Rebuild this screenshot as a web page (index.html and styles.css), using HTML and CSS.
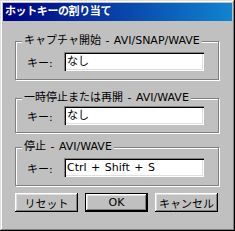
FILE: index.html
```html
<!DOCTYPE html>
<html lang="ja">

<head>
    <meta charset="UTF-8">
    <title>ホットキーの割り当て</title>
    <link rel="stylesheet" href="styles.css">
</head>

<body>
    <div class="window">
        <div class="titlebar">ホットキーの割り当て</div>

        <div class="content">
            <div class="group">
                <span class="group-label">キャプチャ開始 - AVI/SNAP/WAVE</span>
                <div class="field-row">
                    <span class="field-label">キー:</span>
                    <div class="textbox">なし</div>
                </div>
            </div>

            <div class="group group-short">
                <span class="group-label">一時停止または再開 - AVI/WAVE</span>
                <div class="field-row">
                    <span class="field-label">キー:</span>
                    <div class="textbox">なし</div>
                </div>
            </div>

            <div class="group">
                <span class="group-label">停止 - AVI/WAVE</span>
                <div class="field-row">
                    <span class="field-label">キー:</span>
                    <div class="textbox">Ctrl + Shift + S</div>
                </div>
            </div>

            <div class="buttons">
                <button class="btn">リセット</button>
                <button class="btn btn-default">OK</button>
                <button class="btn">キャンセル</button>
            </div>
        </div>
    </div>
</body>

</html>
```

FILE: styles.css
```css
* {
    margin: 0;
    padding: 0;
    box-sizing: border-box;
}

body {
    width: 235px;
    height: 231px;
    font-family: 'DejaVu Sans', 'Noto Sans CJK JP', sans-serif;
    font-size: 11px;
    color: #000;
}

.window {
    width: 235px;
    height: 231px;
    padding: 3px;
    background: #c0c0c0;
    box-shadow: inset -1px -1px #000, inset 1px 1px #dfdfdf,
        inset -2px -2px #808080, inset 2px 2px #fff;
    display: flex;
    flex-direction: column;
}

.titlebar {
    height: 18px;
    line-height: 18px;
    padding-left: 2px;
    background: linear-gradient(90deg, #000080, #1084d0);
    color: #fff;
    font-weight: bold;
    font-size: 11px;
    letter-spacing: -0.4px;
}

.content {
    padding: 20px 13px 0 12px;
    display: flex;
    flex-direction: column;
}

.group {
    position: relative;
    height: 39px;
    margin-bottom: 14px;
    padding: 10px 14px 0 11px;
    border: 1px solid #808080;
    box-shadow: 1px 1px 0 #fff, inset 1px 1px 0 #fff;
}

/* 2つ目の枠だけ少し詰まっている */
.group-short {
    height: 35px;
    margin-top: 4px;
    padding-top: 7px;
}

.group-label {
    position: absolute;
    top: -8px;
    left: 6px;
    padding: 0 2px;
    line-height: 13px;
    background: #c0c0c0;
    white-space: nowrap;
    word-spacing: 1px;
}

.field-row {
    display: flex;
    align-items: center;
}

.field-label {
    width: 37px;
}

.textbox {
    flex: 1;
    height: 19px;
    line-height: 19px;
    padding: 0 3px;
    background: #fff;
    word-spacing: 1px;
    box-shadow: inset 1px 1px #808080, inset 2px 2px #000,
        inset -1px -1px #fff, inset -2px -2px #dfdfdf;
}

.buttons {
    display: flex;
    gap: 7px;
    margin-top: -7px;
}

.btn {
    width: 63px;
    height: 19px;
    font: inherit;
    color: #000;
    background: #c0c0c0;
    border: none;
    box-shadow: inset -1px -1px #000, inset 1px 1px #fff,
        inset -2px -2px #808080, inset 2px 2px #dfdfdf;
}

.btn-default {
    box-shadow: inset 0 0 0 1px #000, inset -2px -2px #000, inset 2px 2px #fff,
        inset -3px -3px #808080, inset 3px 3px #dfdfdf;
}
```
